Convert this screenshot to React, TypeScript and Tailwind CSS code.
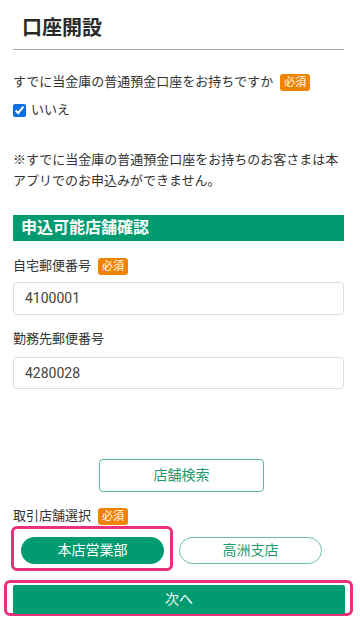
import React from "react";

const Required = () => (
  <span className="ml-[7px] inline-flex h-[17px] w-[30px] items-center justify-center rounded-[3px] bg-[#f08300] text-[11px] leading-none text-white">
    必須
  </span>
);

export default function App() {
  return (
    <div
      className="min-h-[620px] w-[360px] bg-white text-[#333] overflow-hidden"
      style={{ fontFamily: "Roboto, 'Noto Sans CJK JP', sans-serif" }}
    >
      {/* Header */}
      <h1 className="pt-[14px] pl-[22px] text-[20px] font-bold leading-[28px] text-[#2a2a2a]">
        口座開設
      </h1>
      <div className="ml-[13px] mr-[16px] mt-[7px] border-t border-[#aaa]" />

      <div className="pl-[13px] pr-[16px]">
        {/* Existing account question */}
        <div className="mt-[22px] flex items-center text-[13px] leading-[20px]">
          <span>すでに当金庫の普通預金口座をお持ちですか</span>
          <Required />
        </div>
        <label className="mt-[8px] flex items-center text-[13px] leading-[20px]">
          <input
            type="checkbox"
            checked
            readOnly
            className="m-0 h-[13px] w-[13px] accent-[#0b6fe0]"
          />
          <span className="ml-[5px]">いいえ</span>
        </label>

        <p className="mt-[29px] text-[13px] leading-[21px]">
          ※すでに当金庫の普通預金口座をお持ちのお客さまは本アプリでのお申込みができません。
        </p>

        {/* Section bar */}
        <div className="mt-[24px] flex h-[26px] items-center bg-[#009b70] pl-[8px] text-[16px] font-bold text-white">
          申込可能店舗確認
        </div>

        {/* Postal codes */}
        <div className="mt-[15px] flex items-center text-[13px] leading-[20px]">
          <span>自宅郵便番号</span>
          <Required />
        </div>
        <div className="mt-[6px] flex h-[33px] items-center rounded-[4px] border border-[#ddd] pl-[11px] text-[14px] text-[#444]">
          4100001
        </div>

        <div className="mt-[14px] text-[13px] leading-[20px]">勤務先郵便番号</div>
        <div className="mt-[8px] flex h-[32px] items-center rounded-[4px] border border-[#ddd] pl-[11px] text-[14px] text-[#444]">
          4280028
        </div>

        <button className="ml-[86px] mt-[70px] flex h-[33px] w-[165px] items-center justify-center rounded-[4px] border-[1.5px] border-[#5cb89c] bg-white text-[14px] text-[#1f9a6e]">
          店舗検索
        </button>

        {/* Branch select */}
        <div className="mt-[14px] flex items-center text-[13px] leading-[20px]">
          <span>取引店舗選択</span>
          <Required />
        </div>
        <div className="flex items-start">
          <div className="-ml-[2px] h-[45px] w-[162px] rounded-[6px] border-[3px] border-[#e8307c] pl-[7px] pt-[8px]">
            <button className="flex h-[27px] w-[143px] items-center justify-center rounded-full bg-[#009b70] text-[14px] text-white">
              本店営業部
            </button>
          </div>
          <button className="ml-[6px] mt-[11px] flex h-[27px] w-[143px] items-center justify-center rounded-full border border-[#6cbfa5] bg-white text-[14px] text-[#1f9a6e]">
            高洲支店
          </button>
        </div>

        <div className="-ml-[9px] mt-[9px] h-[36px] w-[349px] rounded-[6px] border-[3px] border-[#e8307c] pl-[6px] pt-[2px]">
          <button className="flex h-[29px] w-[332px] items-center justify-center rounded-[2px] bg-[#009b70] text-[14px] text-white">
            次へ
          </button>
        </div>
      </div>
    </div>
  );
}
